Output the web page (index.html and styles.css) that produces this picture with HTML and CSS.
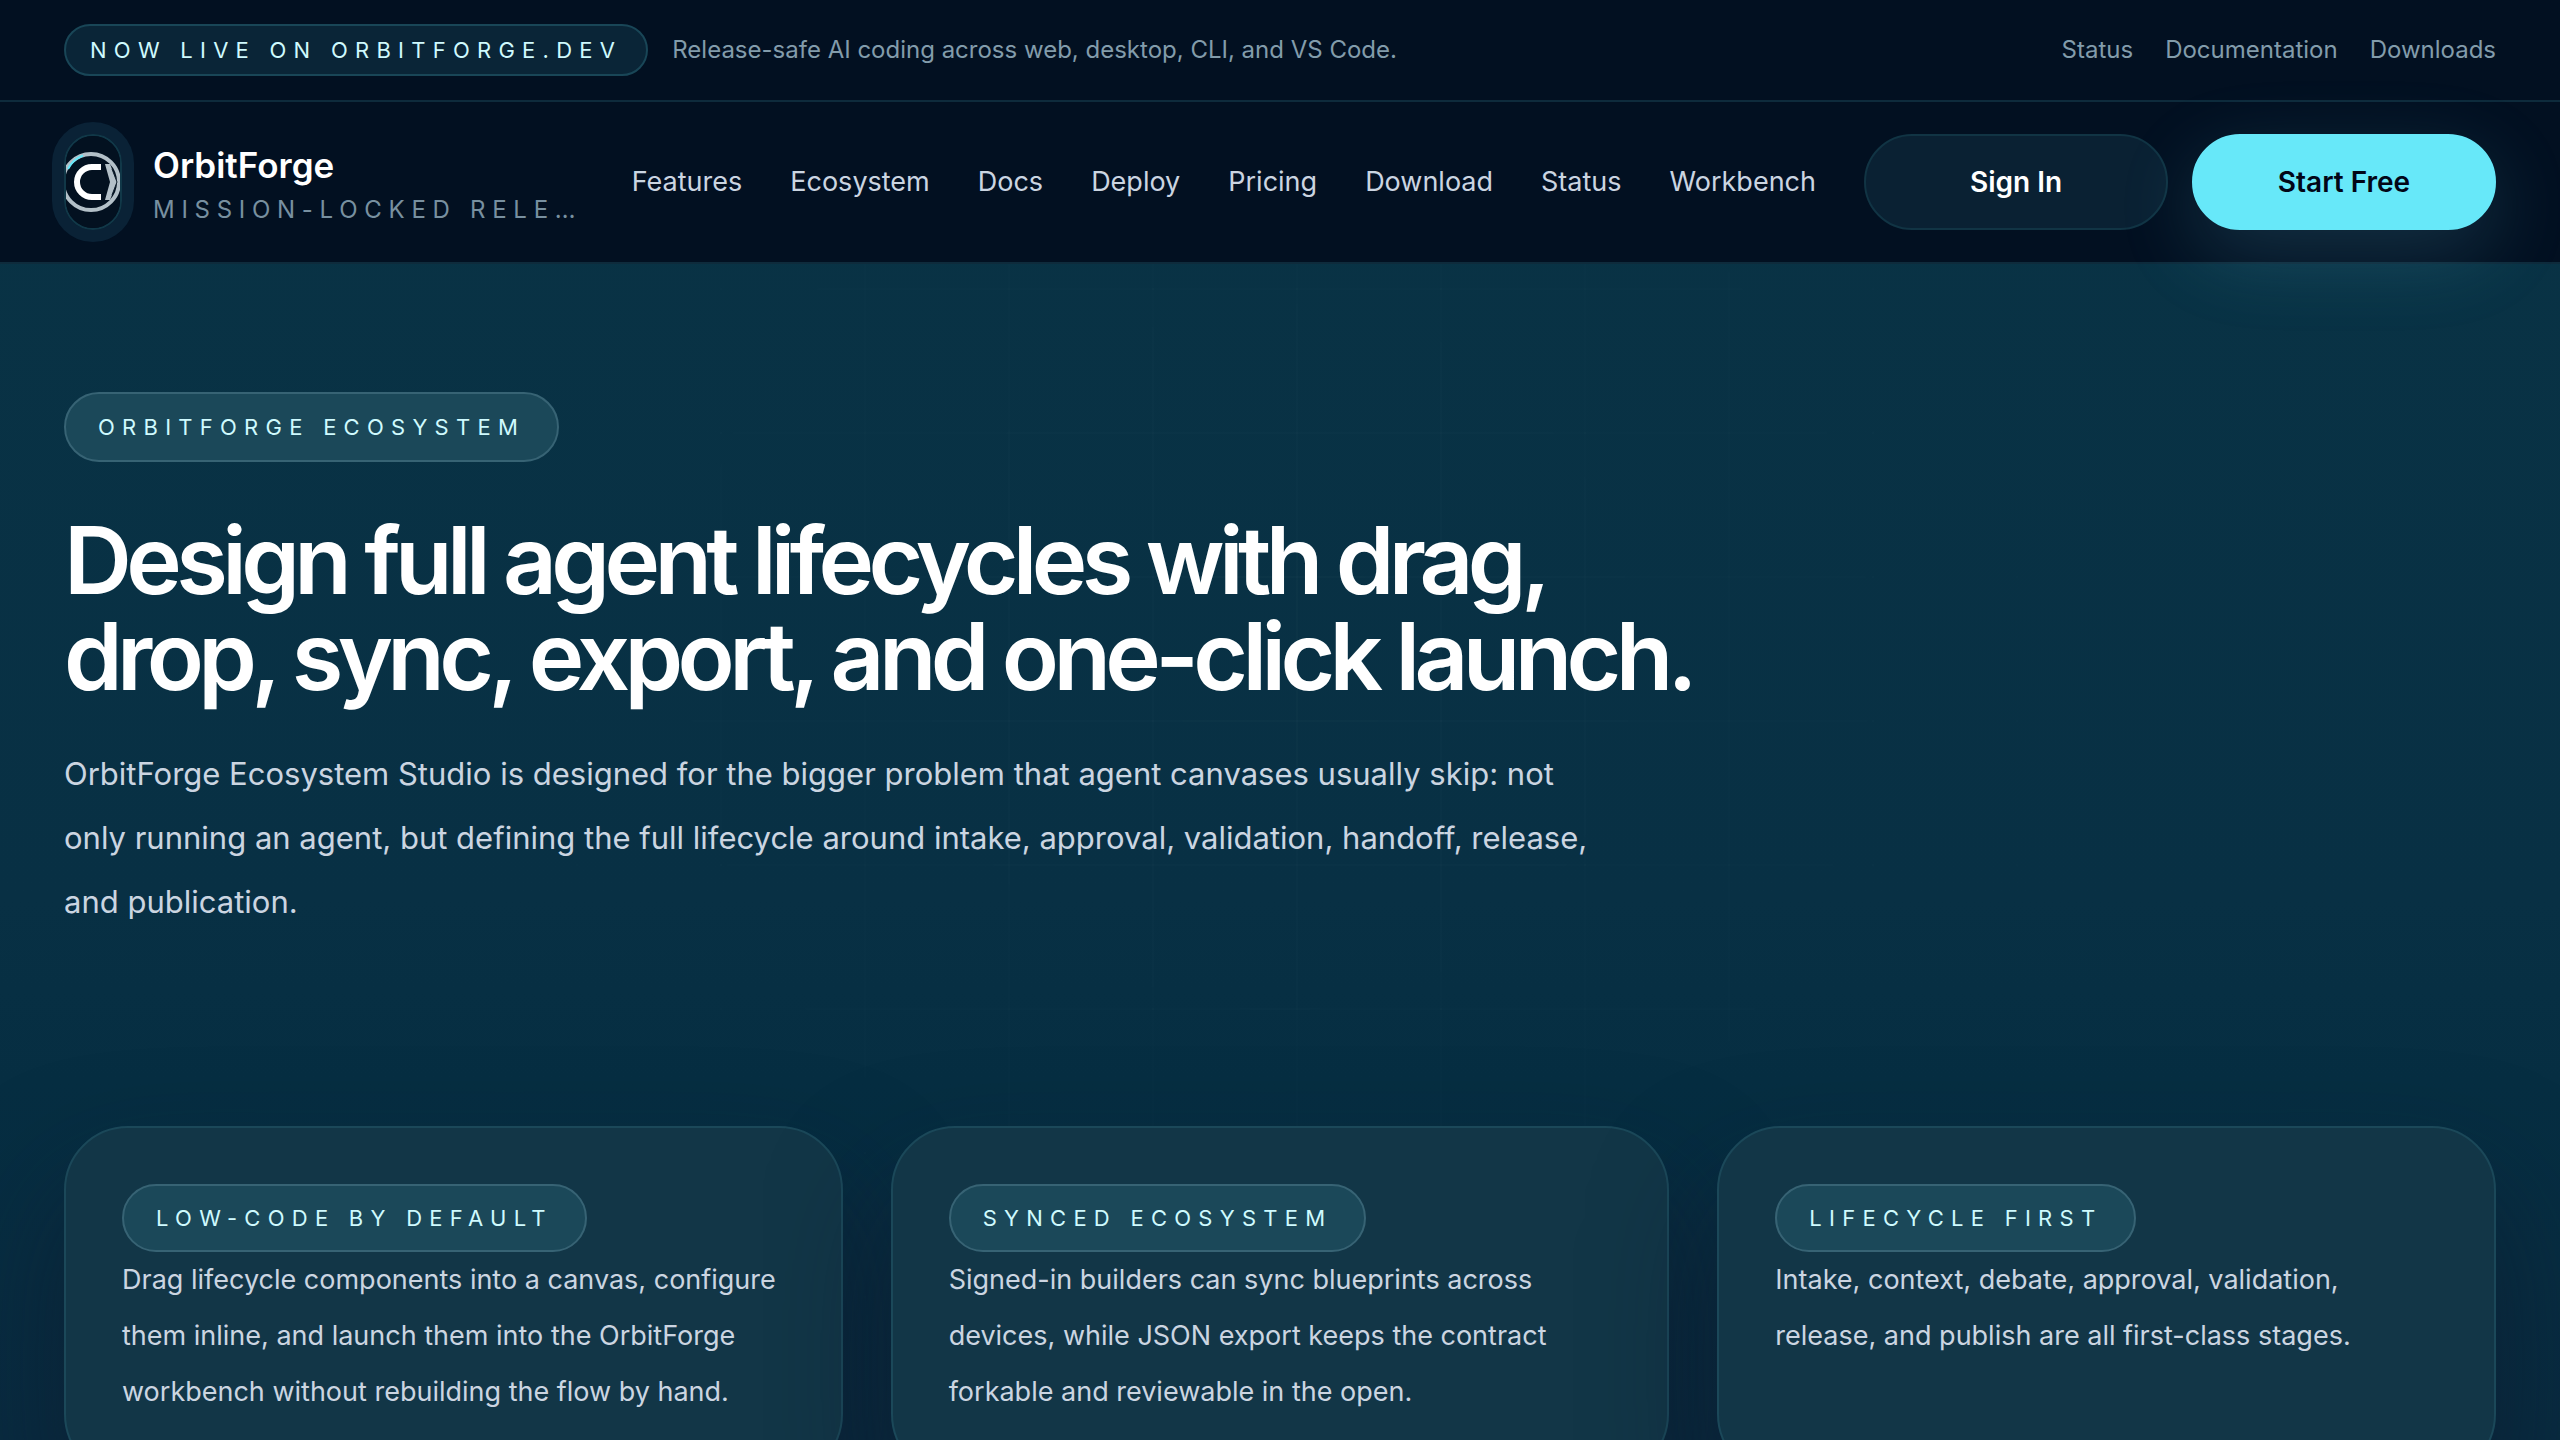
FILE: index.html
```html
<!DOCTYPE html>
<html lang="en">

<head>
  <meta charset="UTF-8" />
  <meta name="viewport" content="width=device-width, initial-scale=1.0" />
  <title>OrbitForge Ecosystem</title>
  <link rel="stylesheet" href="styles.css">
</head>

<body>
  <header class="site-header">
    <div class="topbar">
      <div class="topbar-left">
        <span class="live-badge">NOW LIVE ON ORBITFORGE.DEV</span>
        <span>Release-safe AI coding across web, desktop, CLI, and VS Code.</span>
      </div>
      <div class="topbar-links">
        <a href="#status">Status</a>
        <a href="#docs">Documentation</a>
        <a href="#downloads">Downloads</a>
      </div>
    </div>

    <div class="navbar">
      <a class="brand" href="#home">
        <span class="brand-mark">
          <svg viewBox="0 0 54 92" aria-hidden="true">
            <rect width="54" height="92" fill="#031120" />
            <circle cx="25" cy="46" r="28" fill="none" stroke="#b3c0c8" stroke-width="4" />
            <path d="M2 33 A28 28 0 0 1 17 19.500" fill="none" stroke="#67e8f9" stroke-width="2" />
            <path d="M35 31 H26 A15 15 0 0 0 26 61 H35" fill="none" stroke="#fff" stroke-width="6" />
            <path d="M39 28 H44 L51 46 L44 64 H39 L44 46 Z" fill="#b3c0c8" />
            <path d="M46 33 L51 46 L46 59" fill="none" stroke="#10202e" stroke-width="1" />
          </svg>
        </span>
        <span class="brand-text">
          <span class="brand-name">OrbitForge</span>
          <span class="brand-tagline">MISSION-LOCKED RELEASES</span>
        </span>
      </a>

      <nav class="nav-links">
        <a href="#features">Features</a>
        <a href="#ecosystem">Ecosystem</a>
        <a href="#docs">Docs</a>
        <a href="#deploy">Deploy</a>
        <a href="#pricing">Pricing</a>
        <a href="#download">Download</a>
        <a href="#status">Status</a>
        <a href="#workbench">Workbench</a>
      </nav>

      <div class="nav-actions">
        <button class="btn btn-ghost" type="button">Sign In</button>
        <button class="btn btn-primary" type="button">Start Free</button>
      </div>
    </div>
  </header>

  <main class="page">
    <section class="hero">
      <span class="pill">ORBITFORGE ECOSYSTEM</span>
      <h1>Design full agent lifecycles with drag, drop, sync, export, and one-click launch.</h1>
      <p>OrbitForge Ecosystem Studio is designed for the bigger problem that agent canvases usually skip: not only running an agent, but defining the full lifecycle around intake, approval, validation, handoff, release, and publication.</p>
    </section>

    <section class="cards">
      <article class="card">
        <span class="pill">LOW-CODE BY DEFAULT</span>
        <p>Drag lifecycle components into a canvas, configure them inline, and launch them into the OrbitForge workbench without rebuilding the flow by hand.</p>
      </article>
      <article class="card">
        <span class="pill">SYNCED ECOSYSTEM</span>
        <p>Signed-in builders can sync blueprints across devices, while JSON export keeps the contract forkable and reviewable in the open.</p>
      </article>
      <article class="card">
        <span class="pill">LIFECYCLE FIRST</span>
        <p>Intake, context, debate, approval, validation, release, and publish are all first-class stages.</p>
      </article>
    </section>
  </main>
</body>

</html>
```

FILE: styles.css
```css
* {
  box-sizing: border-box;
}

body {
  margin: 0;
  min-height: 100vh;
  overflow-x: hidden;
  font-family: Inter, "Liberation Sans", sans-serif;
  color: #fff;
  background: linear-gradient(180deg, #093345 0, #083044 900px, #062e42 1080px, #082b40 1440px);
}

a {
  color: inherit;
  text-decoration: none;
}

.site-header {
  position: relative;
  z-index: 2;
  background: #021021;
  border-bottom: 2px solid #0e2b3c;
}

.topbar {
  display: flex;
  justify-content: space-between;
  align-items: center;
  padding: 24px 64px;
  border-bottom: 2px solid #0e2b3c;
  font-size: 24px;
  line-height: 32px;
  color: #829cab;
}

.topbar-left {
  display: flex;
  align-items: center;
  gap: 24px;
}

.topbar-links {
  display: flex;
  gap: 32px;
}

.live-badge {
  padding: 8px 24px;
  border: 2px solid #194657;
  border-radius: 999px;
  background: #0a2537;
  font-size: 22px;
  letter-spacing: 0.33em;
  color: #cffafe;
}

.navbar {
  display: flex;
  align-items: center;
  gap: 48px;
  padding: 32px 64px;
}

.brand {
  display: flex;
  flex: 1;
  align-items: center;
  gap: 31px;
  min-width: 0;
}

.brand-mark {
  flex: none;
  width: 58px;
  height: 96px;
  border: 2px solid #113848;
  border-radius: 999px;
  overflow: hidden;
  box-shadow: 0 0 0 12px #0a2236;
}

.brand-mark svg {
  display: block;
  width: 100%;
  height: 100%;
}

.brand-text {
  display: flex;
  flex-direction: column;
  min-width: 0;
}

.brand-name {
  font-size: 35px;
  line-height: 56px;
  font-weight: 600;
}

.brand-tagline {
  overflow: hidden;
  text-overflow: ellipsis;
  white-space: nowrap;
  font-size: 24px;
  line-height: 34px;
  letter-spacing: 0.28em;
  color: #7890a0;
}

.nav-links {
  display: flex;
  gap: 48px;
  font-size: 27px;
  line-height: 40px;
  color: #cbd5e1;
}

.nav-actions {
  display: flex;
  gap: 24px;
}

.btn {
  width: 304px;
  height: 96px;
  border: 2px solid transparent;
  border-radius: 999px;
  font-family: inherit;
  font-size: 28px;
  font-weight: 600;
  cursor: pointer;
}

.btn-ghost {
  border-color: #113444;
  background: #0a2133;
  color: #fff;
}

.btn-primary {
  border-color: #67e8f9;
  background: #67e8f9;
  color: #020617;
  box-shadow: 0 24px 80px rgba(103, 200, 225, 0.18);
}

.page {
  position: relative;
  padding: 128px 64px 96px;
}

/* faint blueprint grid, fades out towards the edges */
.page::before {
  content: "";
  position: absolute;
  inset: 0;
  background-image:
    linear-gradient(rgba(255, 255, 255, 0.015) 2px, transparent 2px),
    linear-gradient(90deg, rgba(255, 255, 255, 0.015) 2px, transparent 2px);
  background-position: 0 24px;
  background-size: 144px 144px;
  mask-image: radial-gradient(circle at 50% 30%, #000, transparent 60%);
}

.hero {
  position: relative;
  max-width: 1680px;
}

.pill {
  display: block;
  width: fit-content;
  padding: 16px 32px;
  border: 2px solid #376374;
  border-radius: 999px;
  background: #1b4859;
  font-size: 22px;
  line-height: 34px;
  letter-spacing: 0.33em;
  color: #cffafe;
}

.hero h1 {
  margin: 50px 0 38px;
  font-size: 94px;
  line-height: 96px;
  font-weight: 600;
  letter-spacing: -0.06em;
}

.hero p {
  max-width: 1536px;
  margin: 0;
  font-size: 31px;
  line-height: 64px;
  color: #cbd5e1;
}

.cards {
  position: relative;
  display: grid;
  grid-template-columns: repeat(3, 1fr);
  gap: 48px;
  margin-top: 192px;
}

.card {
  padding: 56px;
  border: 2px solid #1b4859;
  border-radius: 64px;
  background: #123647;
  box-shadow: 0 64px 120px rgba(15, 23, 42, 0.5);
}

.card .pill {
  line-height: 32px;
}

.card p {
  margin: 0;
  font-size: 27px;
  line-height: 56px;
  color: #cbd5e1;
}
```
